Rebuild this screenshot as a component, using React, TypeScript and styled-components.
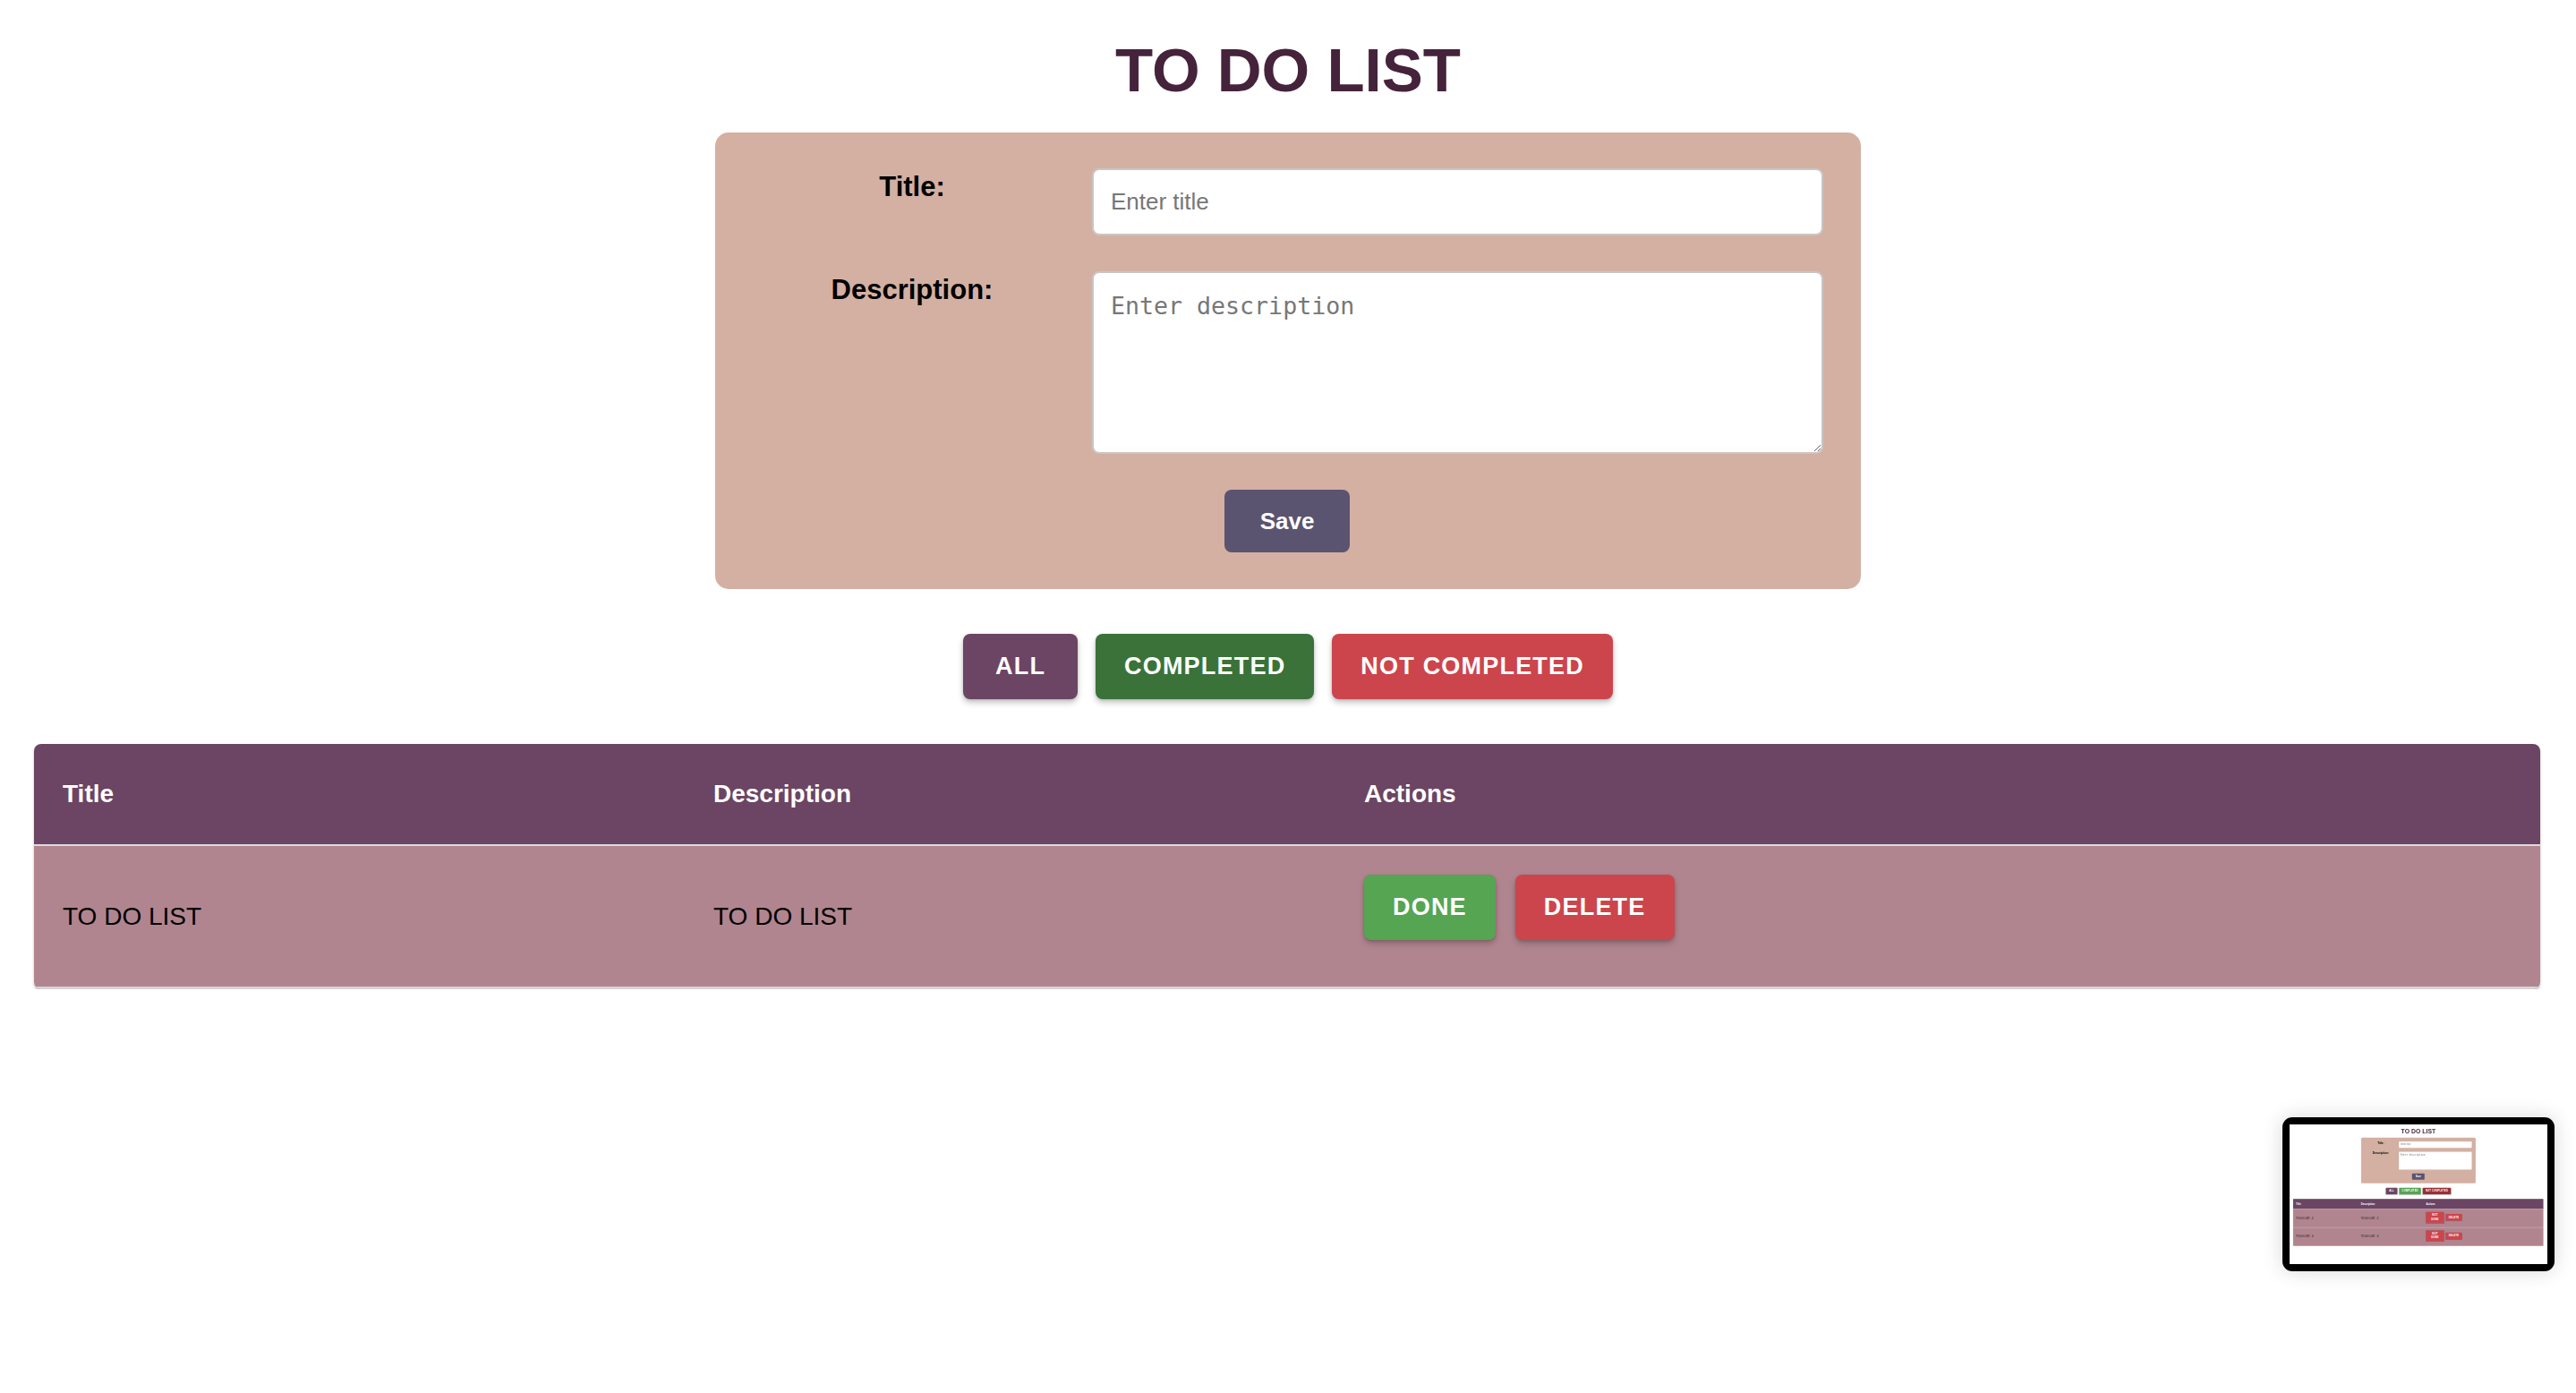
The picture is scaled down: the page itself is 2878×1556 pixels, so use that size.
import React from "react";
import styled, { createGlobalStyle, css } from "styled-components";

type Todo = { title: string; description: string; done: boolean };
type Filter = "all" | "completed" | "notCompleted";

const GlobalStyle = createGlobalStyle`
	html, body {
		margin: 0;
		padding: 0;
		background: #ffffff;
		font-family: "Liberation Sans", Arial, sans-serif;
	}
	* {
		box-sizing: border-box;
	}
`;

const tones = {
	purple: { base: "#6b4563", active: "#6b4563" },
	green: { base: "#55a553", active: "#3a7239" },
	red: { base: "#cc454c", active: "#9c2e36" },
};

export default function App() {
	const todos: Todo[] = [{ title: "TO DO LIST", description: "TO DO LIST", done: false }];
	const preview: Todo[] = [
		{ title: "TO DO LIST - 2", description: "TO DO LIST - 2", done: true },
		{ title: "TO DO LIST - 3", description: "TO DO LIST - 3", done: true },
	];

	return (
		<>
			<GlobalStyle />
			<TodoScreen todos={todos} filter='completed' />
			<Thumbnail>
				<ThumbScreen>
					<ThumbCanvas>
						<TodoScreen todos={preview} filter='notCompleted' />
					</ThumbCanvas>
				</ThumbScreen>
			</Thumbnail>
		</>
	);
}

function TodoScreen({ todos, filter }: { todos: Todo[]; filter: Filter }) {
	return (
		<Page>
			<Heading>TO DO LIST</Heading>
			<FormPanel>
				<Label htmlFor='title'>Title:</Label>
				<TextInput id='title' placeholder='Enter title' />
				<Label htmlFor='description'>Description:</Label>
				<TextArea id='description' placeholder='Enter description' />
				<SaveButton>Save</SaveButton>
			</FormPanel>

			<FilterBar>
				<ActionButton $tone='purple' $active={filter === "all"}>
					All
				</ActionButton>
				<ActionButton $tone='green' $active={filter === "completed"}>
					Completed
				</ActionButton>
				<ActionButton $tone='red' $active={filter === "notCompleted"}>
					Not Completed
				</ActionButton>
			</FilterBar>

			<Table>
				<HeaderRow>
					<span>Title</span>
					<span>Description</span>
					<span>Actions</span>
				</HeaderRow>
				{todos.map((todo, i) => (
					<BodyRow key={i}>
						<span>{todo.title}</span>
						<span>{todo.description}</span>
						<Actions>
							{todo.done ? (
								<ActionButton $tone='red' $narrow>
									Not Done
								</ActionButton>
							) : (
								<ActionButton $tone='green'>Done</ActionButton>
							)}
							<ActionButton $tone='red'>Delete</ActionButton>
						</Actions>
					</BodyRow>
				))}
			</Table>
		</Page>
	);
}

const Page = styled.div`
	width: 2878px;
	padding-top: 44px;
	display: flex;
	flex-direction: column;
	align-items: center;
`;

const Heading = styled.h1`
	margin: 0;
	font-size: 69px;
	line-height: 1;
	font-weight: 700;
	color: #45233b;
`;

const FormPanel = styled.div`
	margin-top: 35px;
	width: 1280px;
	padding: 40px 42px 41px 40px;
	background-color: #d4b0a2;
	border-radius: 15px;
	display: grid;
	grid-template-columns: 360px 1fr;
	column-gap: 21px;
	row-gap: 40px;
`;

const Label = styled.label`
	padding-top: 3px;
	font-size: 31px;
	line-height: 1.15;
	font-weight: 700;
	color: #000;
	text-align: center;
`;

const fieldBase = css`
	width: 100%;
	border: 2px solid #c9c6c5;
	border-radius: 8px;
	background: #ffffff;
	color: #222;
	outline: none;

	&::placeholder {
		color: #777;
	}
`;

const TextInput = styled.input`
	${fieldBase}
	height: 75px;
	padding: 0 19px;
	font-family: "Liberation Sans", Arial, sans-serif;
	font-size: 26px;
`;

const TextArea = styled.textarea`
	${fieldBase}
	height: 204px;
	padding: 21px 19px;
	font-family: "DejaVu Sans Mono", "Liberation Mono", monospace;
	font-size: 26.6px;
	resize: vertical;
`;

const SaveButton = styled.button`
	grid-column: 1 / -1;
	justify-self: center;
	width: 140px;
	height: 70px;
	border: none;
	border-radius: 8px;
	background-color: #5b5470;
	color: #ffffff;
	font-family: "Liberation Sans", Arial, sans-serif;
	font-size: 26px;
	font-weight: 700;
`;

const FilterBar = styled.div`
	margin-top: 50px;
	display: flex;
	gap: 20px;
`;

const ActionButton = styled.button<{
	$tone: keyof typeof tones;
	$active?: boolean;
	$narrow?: boolean;
}>`
	min-width: 128px;
	min-height: 73px;
	padding: 0 32px;
	border: none;
	border-radius: 8px;
	background-color: ${(p) => (p.$active ? tones[p.$tone].active : tones[p.$tone].base)};
	color: #ffffff;
	font-family: "Liberation Sans", Arial, sans-serif;
	font-size: 27px;
	font-weight: 700;
	letter-spacing: 1.2px;
	text-transform: uppercase;
	box-shadow: 0 4px 7px rgba(0, 0, 0, 0.22), 0 1px 3px rgba(0, 0, 0, 0.14);
	${(p) =>
		p.$narrow &&
		css`
			width: 200px;
			height: 120px;
			line-height: 1.6;
		`}
`;

const Table = styled.div`
	margin-top: 50px;
	align-self: stretch;
	margin-left: 38px;
	margin-right: 40px;
	border-radius: 8px;
	overflow: hidden;
	box-shadow: 0 2px 3px rgba(0, 0, 0, 0.25);
`;

const rowGrid = css`
	display: grid;
	grid-template-columns: 727px 727px 1fr;
	align-items: center;
	padding: 0 32px;
`;

const HeaderRow = styled.div`
	${rowGrid}
	height: 114px;
	background-color: #6b4563;
	border-bottom: 2px solid #dedbde;
	color: #ffffff;
	font-size: 28px;
	font-weight: 700;
`;

const BodyRow = styled.div`
	${rowGrid}
	min-height: 160px;
	background-color: #b1858f;
	border-bottom: 3px solid #d8d4d6;
	color: #000000;
	font-size: 28px;
`;

const Actions = styled.div`
	display: flex;
	align-items: center;
	gap: 22px;
	padding: 32px 0 52px;
`;

const Thumbnail = styled.div`
	position: fixed;
	left: 2550px;
	top: 1248px;
	padding: 8px;
	background: #000000;
	border-radius: 11px;
	box-shadow: 0 0 22px rgba(0, 0, 0, 0.16);
`;

const ThumbScreen = styled.div`
	width: 288px;
	height: 156px;
	overflow: hidden;
	background: #ffffff;
`;

const ThumbCanvas = styled.div`
	width: 2878px;
	height: 1560px;
	transform: scale(0.1);
	transform-origin: top left;
`;
